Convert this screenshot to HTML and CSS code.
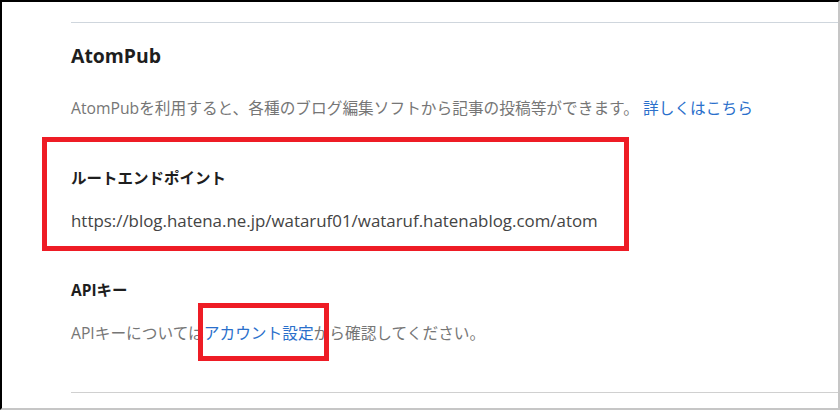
FILE: index.html
```html
<!DOCTYPE html>
<html lang="ja">
<head>
<meta charset="utf-8">
<link rel="stylesheet" href="styles.css">
</head>
<body>
<div class="frame">
  <div class="content">
    <hr class="sep sep-top">
    <h2 class="title">AtomPub</h2>
    <p class="desc desc-atom">AtomPubを利用すると、各種のブログ編集ソフトから記事の投稿等ができます。 <a class="link" href="#">詳しくはこちら</a></p>
    <h3 class="label label-endpoint">ルートエンドポイント</h3>
    <p class="url">https://blog.hatena.ne.jp/wataruf01/wataruf.hatenablog.com/atom</p>
    <h3 class="label label-api">APIキー</h3>
    <p class="desc desc-api">APIキーについては<a class="link" href="#">アカウント設定</a>から確認してください。</p>
    <hr class="sep sep-bottom">
  </div>
  <div class="mark mark-endpoint"></div>
  <div class="mark mark-api"></div>
</div>
</body>
</html>
```

FILE: styles.css
```css
html, body {
  margin: 0;
  padding: 0;
  background: #ffffff;
}

.frame {
  position: relative;
  box-sizing: border-box;
  width: 840px;
  height: 410px;
  overflow: hidden;
  border-top: 2px solid #000000;
  border-left: 2px solid #000000;
  border-right: 2px solid #c6c6c6;
  border-bottom: 2px solid #c6c6c6;
  font-family: "Open Sans", "Noto Sans CJK JP", sans-serif;
}

.content {
  padding-left: 69px;
  display: flex;
  flex-direction: column;
}

.sep {
  margin: 0;
  border: 0;
  height: 1px;
}

.sep-top {
  margin-top: 20px;
  background: #cfd6dd;
}

.sep-bottom {
  margin-top: 47px;
  background: #d0d0d0;
}

.title {
  margin: 18px 0 0;
  font-size: 19.4px;
  line-height: 30px;
  font-weight: 700;
  color: #1e1e1e;
}

.desc {
  margin: 0;
  font-size: 15.7px;
  line-height: 24px;
  color: #767676;
}

.desc-atom {
  margin-top: 25px;
}

.desc-api {
  margin-top: 19px;
}

.link {
  color: #2a6fcb;
  text-decoration: none;
}

.label {
  margin: 0;
  font-size: 15.5px;
  line-height: 24px;
  font-weight: 700;
  color: #1e1e1e;
}

.label-endpoint {
  margin-top: 46px;
}

.label-api {
  margin-top: 45px;
}

.url {
  margin: 19px 0 0;
  font-size: 16.9px;
  line-height: 24px;
  color: #444444;
}

.mark {
  position: absolute;
  box-sizing: border-box;
  border: 5px solid #ee1c25;
}

.mark-endpoint {
  left: 40px;
  top: 135px;
  width: 587px;
  height: 114px;
}

.mark-api {
  left: 196px;
  top: 301px;
  width: 131px;
  height: 58px;
}
```
